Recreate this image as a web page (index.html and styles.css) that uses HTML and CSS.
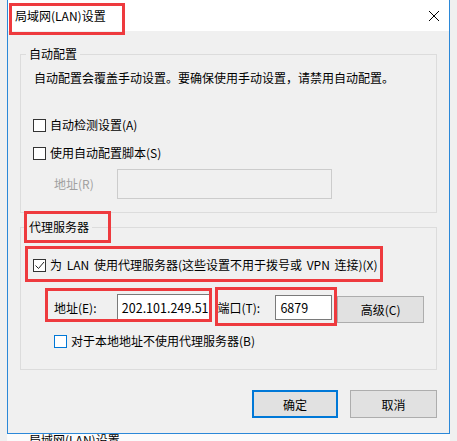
FILE: index.html
```html
<!DOCTYPE html>
<html lang="zh-CN">
<head>
  <meta charset="UTF-8" />
  <title>局域网(LAN)设置</title>
  <link rel="stylesheet" href="styles.css">
</head>
<body>
  <div class="screen">
    <div class="window">
      <div class="titlebar">
        <span class="title">局域网(LAN)设置</span>
        <svg class="close" width="10" height="10" viewBox="0 0 10 10">
          <path d="M0 0L10 10M10 0L0 10" stroke="#000" stroke-width="1" fill="none" />
        </svg>
      </div>

      <div class="dialog">
        <fieldset class="group group-auto">
          <legend>自动配置</legend>
          <div class="note">自动配置会覆盖手动设置。要确保使用手动设置，请禁用自动配置。</div>
          <label class="check row-detect"><span class="box"></span>自动检测设置(A)</label>
          <label class="check row-script"><span class="box"></span>使用自动配置脚本(S)</label>
          <div class="field row-url">
            <span class="field-label disabled">地址(R)</span>
            <span class="input input-url"></span>
          </div>
        </fieldset>

        <fieldset class="group group-proxy">
          <legend>代理服务器</legend>
          <label class="check row-proxy">
            <span class="box">
              <svg width="11" height="11" viewBox="0 0 11 11">
                <path d="M1.5 5.5L4.5 8.5L10 2" stroke="#222" stroke-width="1" fill="none" />
              </svg>
            </span>为 LAN 使用代理服务器(这些设置不用于拨号或 VPN 连接)(X)
          </label>
          <div class="field row-server">
            <span class="field-label">地址(E):</span>
            <span class="input input-host">202.101.249.51</span>
            <span class="field-label label-port">端口(T):</span>
            <span class="input input-port">6879</span>
            <button class="btn btn-advanced">高级(C)</button>
          </div>
          <label class="check row-bypass"><span class="box box-focus"></span>对于本地地址不使用代理服务器(B)</label>
        </fieldset>

        <div class="actions">
          <button class="btn btn-ok">确定</button>
          <button class="btn btn-cancel">取消</button>
        </div>
      </div>
    </div>
    <div class="under">局域网(LAN)设置</div>

    <!-- red annotation frames -->
    <div class="mark mark-title"></div>
    <div class="mark mark-proxy-title"></div>
    <div class="mark mark-proxy-check"></div>
    <div class="mark mark-server"></div>
    <div class="mark mark-port"></div>
  </div>
</body>
</html>
```

FILE: styles.css
```css
body {
  margin: 0;
  background: #f0f0f0;
  font-family: "Noto Sans CJK SC", sans-serif;
  font-size: 12px;
  color: #000;
}

.screen {
  position: relative;
  height: 441px;
  overflow: hidden;
  padding-left: 7px;
}

.window {
  width: 443px;
  box-sizing: border-box;
  border: 1px solid #2b88d8;
  border-top: none;
  background: #f0f0f0;
}

.titlebar {
  height: 31px;
  background: #fff;
  display: flex;
  align-items: center;
  justify-content: space-between;
  padding: 0 10px 0 7px;
}

.title {
  line-height: 16px;
  padding-top: 1px;
}

.dialog {
  padding: 0 12px 15px;
}

.group {
  margin: 0;
  padding: 0 12px 13px;
  border: 1px solid #dcdcdc;
  min-width: 0;
}

.group legend {
  margin-left: -7px;
  padding: 0 3px;
  line-height: 16px;
}

.group-auto {
  margin-top: 15px;
}

.group-proxy {
  margin-top: 6px;
  padding-bottom: 20px;
}

.note {
  margin-top: 8px;
  padding-left: 1px;
  line-height: 16px;
}

.check {
  display: flex;
  align-items: center;
  gap: 4px;
  height: 16px;
  line-height: 16px;
}

.box {
  width: 13px;
  height: 13px;
  box-sizing: border-box;
  border: 1px solid #333;
  background: #fff;
  display: flex;
  align-items: center;
  justify-content: center;
}

.box-focus {
  border-color: #0078d7;
}

.row-detect { margin-top: 31px; }
.row-script { margin-top: 12px; }
.row-proxy { margin-top: 22px; word-spacing: 2px; }
.row-bypass { margin-top: 9px; margin-left: 21px; }

.field {
  display: flex;
  align-items: flex-start;
}

.field-label {
  width: 63px;
  margin-left: 21px;
  line-height: 16px;
}

.disabled {
  color: #a0a0a0;
}

.row-url {
  margin-top: 8px;
  height: 30px;
  align-items: center;
}

.input {
  box-sizing: border-box;
  border: 1px solid #7a7a7a;
  background: #fff;
  padding-left: 4px;
  display: flex;
  align-items: center;
  overflow: hidden;
  white-space: nowrap;
  font-size: 12.5px;
}

.input-url {
  width: 215px;
  height: 30px;
  border-color: #cccccc;
  background: #f0f0f0;
}

.row-server {
  margin-top: 21px;
  height: 30px;
}

.row-server .field-label {
  margin-top: 6px;
}

.input-host {
  width: 94px;
  height: 26px;
}

.label-port {
  width: 58px;
  margin-left: 7px;
}

.input-port {
  width: 57px;
  height: 25px;
  margin-top: 1px;
}

.btn {
  box-sizing: border-box;
  background: #e1e1e1;
  border: 1px solid #adadad;
  font: inherit;
  color: #000;
  padding: 0;
}

.btn-advanced {
  width: 87px;
  height: 27px;
  margin-left: 5px;
  margin-top: 2px;
}

.actions {
  display: flex;
  justify-content: flex-end;
  gap: 12px;
  margin-top: 20px;
}

.btn-ok {
  width: 86px;
  height: 28px;
  border: 2px solid #0078d7;
}

.btn-cancel {
  width: 87px;
  height: 28px;
}

.under {
  width: 443px;
  box-sizing: border-box;
  background: #fbfbfb;
  padding-left: 22px;
  line-height: 12px;
  height: 8px;
  overflow: hidden;
}

.mark {
  position: absolute;
  box-sizing: border-box;
  border: 3px solid #ee3a3e;
}

.mark-title { left: 9px; top: 3px; width: 116px; height: 32px; }
.mark-proxy-title { left: 24px; top: 211px; width: 87px; height: 32px; }
.mark-proxy-check { left: 25px; top: 246px; width: 358px; height: 36px; }
.mark-server { left: 45px; top: 288px; width: 167px; height: 34px; }
.mark-port { left: 215px; top: 287px; width: 122px; height: 39px; }
```
